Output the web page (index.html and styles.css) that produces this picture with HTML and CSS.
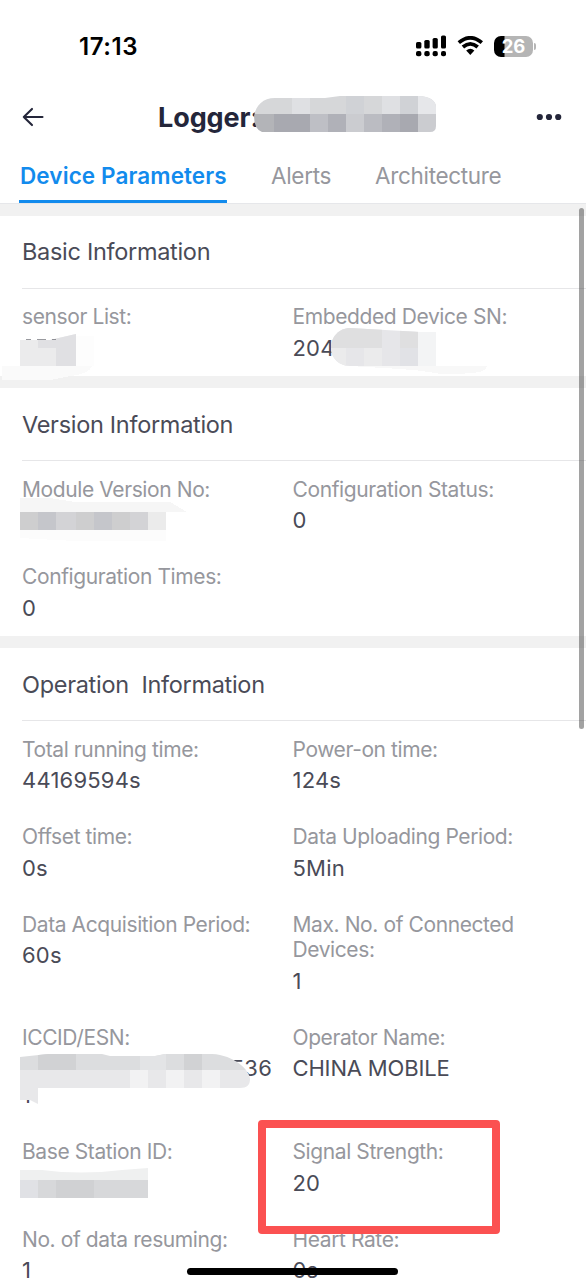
FILE: index.html
```
<!DOCTYPE html>
<html lang="en">
<head>
<meta charset="utf-8">
<title>Logger</title>
<link rel="stylesheet" href="styles.css">
</head>
<body>
<div class="screen">
  <header class="statusbar">
    <span class="clock">17:13</span>
    <div class="indicators">
      <svg class="signal" width="31" height="22" viewBox="0 0 31 22">
        <rect x="0" y="7" width="5.4" height="6.5" rx="1.6"/><rect x="8.3" y="5" width="5.4" height="8.5" rx="1.6"/><rect x="16.6" y="3" width="5.2" height="10.5" rx="1.6"/><rect x="25" y="0.5" width="5" height="13" rx="1.6"/>
        <rect x="0" y="16" width="5.4" height="5.3" rx="2"/><rect x="8.3" y="16" width="5.4" height="5.3" rx="2"/><rect x="16.6" y="16" width="5.2" height="5.3" rx="2"/><rect x="25" y="16" width="5" height="5.3" rx="2"/>
      </svg>
      <svg class="wifi" width="27" height="20" viewBox="0 0 27 20">
        <path d="M1.8 6.7Q13.3-3.1 24.8 6.7" fill="none" stroke="#000" stroke-width="3.7"/>
        <path d="M5.9 11Q13.3 4.6 20.7 11" fill="none" stroke="#000" stroke-width="3.7"/>
        <path d="M9.2 14.5Q13.3 11.2 17.4 14.5L13.3 19Z"/>
      </svg>
      <div class="battery"><span>26</span></div>
      <i class="battery-tip"></i>
    </div>
  </header>
  <nav class="titlebar">
    <svg width="24" height="22" viewBox="0 0 24 22" fill="none" stroke="#24263a" stroke-width="2.1" stroke-linecap="round" stroke-linejoin="round"><path d="M1.8 11H20.5M10 2.9L1.8 11L10 19.1"/></svg>
    <h1>Logger:</h1>
    <svg class="more" width="26" height="8" viewBox="0 0 26 8" fill="#24263a"><circle cx="3.8" cy="4" r="3.1"/><circle cx="13" cy="4" r="3.1"/><circle cx="22.2" cy="4" r="3.1"/></svg>
  </nav>
  <div class="tabs">
    <span class="tab active">Device Parameters</span>
    <span class="tab alerts">Alerts</span>
    <span class="tab arch">Architecture</span>
  </div>
  <main>
    <section>
      <h2>Basic Information</h2>
      <dl>
        <div><dt>sensor List:</dt><dd></dd></div>
        <div><dt>Embedded Device SN:</dt><dd>204</dd></div>
      </dl>
    </section>
    <section>
      <h2>Version Information</h2>
      <dl>
        <div><dt>Module Version No:</dt><dd></dd></div>
        <div><dt>Configuration Status:</dt><dd>0</dd></div>
        <div><dt>Configuration Times:</dt><dd>0</dd></div>
      </dl>
    </section>
    <section>
      <h2>Operation&nbsp; Information</h2>
      <dl>
        <div><dt>Total running time:</dt><dd>44169594s</dd></div>
        <div><dt>Power-on time:</dt><dd>124s</dd></div>
        <div><dt>Offset time:</dt><dd>0s</dd></div>
        <div><dt>Data Uploading Period:</dt><dd>5Min</dd></div>
        <div><dt>Data Acquisition Period:</dt><dd>60s</dd></div>
        <div><dt>Max. No. of Connected<br>Devices:</dt><dd>1</dd></div>
        <div><dt>ICCID/ESN:</dt><dd class="iccid"><span>536</span>1</dd></div>
        <div><dt>Operator Name:</dt><dd class="carrier">CHINA MOBILE</dd></div>
        <div><dt>Base Station ID:</dt><dd></dd></div>
        <div><dt>Signal Strength:</dt><dd>20</dd></div>
        <div><dt>No. of data resuming:</dt><dd>1</dd></div>
        <div><dt>Heart Rate:</dt><dd>0s</dd></div>
      </dl>
    </section>
  </main>

  <svg class="overlay" width="586" height="1282" viewBox="0 0 586 1282" shape-rendering="crispEdges">
    <defs>
      <clipPath id="title-mask"><path d="M254 116C256 105 263 98 275 98H325L340 96H418C430 96 436 101 436 107V126Q436 132 430 132H262Q254 129 254 116Z"/></clipPath>
      <clipPath id="sn-mask"><path d="M331 348C331 337 339 328 350 328L420 332H436V366H350C339 366 331 358 331 348Z"/></clipPath>
      <clipPath id="sensor-mask"><path d="M20 340H50L76 334V366H20Z"/></clipPath>
      <clipPath id="iccid-mask"><path d="M20 1057L48 1054H102L110 1056H155L165 1054H212C234 1055 250 1070 250 1079C250 1085 247 1088 240 1088H38V1104L30 1100H20Z"/></clipPath>
      <clipPath id="station-mask"><path d="M20 1170H42Q80 1175 122 1170L148 1168V1198H20Z"/></clipPath>
    </defs>
    <g clip-path="url(#title-mask)">
      <path fill="#d6d7d9" d="M254 96H436V114H254Z"/><path fill="#dfe0e3" d="M292 96H310V114H292ZM382 96H400V114H382Z"/><path fill="#d0d2d6" d="M346 96H364V114H346ZM400 96H418V114H400Z"/><path fill="#e6e7ea" d="M418 96H436V114H418Z"/>
      <path fill="#b3b4b8" d="M254 114H274V132H254Z"/><path fill="#a8a9b0" d="M274 114H310V132H274ZM400 114H418V132H400Z"/><path fill="#bebfc5" d="M310 114H328V132H310Z"/><path fill="#b0b1b8" d="M328 114H346V132H328ZM382 114H400V132H382Z"/><path fill="#cbccd0" d="M346 114H364V132H346ZM418 114H436V132H418Z"/><path fill="#bbbcc2" d="M364 114H382V132H364Z"/>
    </g>
    <path fill="#fafafa" d="M2 366H92Q89 374 70 376L50 380H2Z"/><path fill="#fdfdfd" d="M76 336H94V366H76Z"/>
    <g clip-path="url(#sensor-mask)"><path fill="#ebebec" d="M20 334H76V366H20Z"/><path fill="#e0e0e3" d="M38 334H76V348H38ZM56 348H76V366H56Z"/></g>
    <path fill="#55565f" d="M26 339H31V340H26ZM37 339H46V340H37ZM52 339H56V340H52Z" opacity=".6"/>
    <path fill="#f8f8f8" d="M350 366H487Q486 373 465 373.500H438Q420 370 400 369Z"/>
    <g clip-path="url(#sn-mask)"><path fill="#e6e6e9" d="M331 328H418V366H331Z"/><path fill="#dfdfe0" d="M331 328H382V348H331ZM400 328H418V348H400Z"/><path fill="#ebebec" d="M331 348H346V366H331ZM364 348H382V366H364Z"/><path fill="#e1e2e6" d="M400 348H418V366H400Z"/><path fill="#f3f4f5" d="M418 328H436V366H418Z"/></g>
    <path fill="#f6f6f6" d="M20 498H50L75 502H170L186 511.500H20Z"/><path fill="#fcfcfc" d="M20 530H166V541H75L20 538Z"/>
    <path fill="#cececf" d="M20 512H148V530H20Z"/><path fill="#c5c6cb" d="M38 512H56V530H38ZM94 512H112V530H94Z"/><path fill="#d3d3d6" d="M56 512H76V530H56ZM130 512H148V530H130Z"/><path fill="#ebebeb" d="M148 512H166V530H148Z"/>
    <g clip-path="url(#iccid-mask)"><path fill="#dcdddf" d="M20 1054H250V1070H20Z"/><path fill="#d1d2d4" d="M38 1054H76V1070H38ZM184 1054H202V1070H184Z"/><path fill="#e3e4e6" d="M140 1054H166V1070H140Z"/><path fill="#e8e8ea" d="M20 1070H250V1104H20Z"/><path fill="#f2f2f3" d="M130 1070H148V1088H130ZM166 1070H184V1088H166ZM202 1070H220V1088H202Z"/></g>
    <g clip-path="url(#station-mask)"><path fill="#eff0f0" d="M20 1168H148V1180H20Z"/><path fill="#d7d8da" d="M20 1180H148V1198H20Z"/><path fill="#e0e1e5" d="M20 1180H38V1198H20Z"/><path fill="#d0d1d3" d="M56 1180H94V1198H56Z"/></g>
  </svg>
  <div class="highlight"></div>
  <div class="scrollbar"></div>
  <div class="home-indicator"></div>
</div>
</body>
</html>
```
FILE: styles.css
```
* { box-sizing: border-box; }
html, body { margin: 0; height: 1282px; overflow: hidden; background: #fff; }
.screen { position: relative; width: 586px; height: 1282px; overflow: hidden; font-family: Inter, "Liberation Sans", sans-serif; color: #4a4b57; }
.statusbar { height: 92px; padding: 0 50px 0 79px; display: flex; align-items: center; justify-content: space-between; }
.clock { font-size: 24px; font-weight: 600; color: #000; letter-spacing: .6px; }
.indicators { display: flex; align-items: center; }
.wifi { margin: 0 10px 0 10px; }
.battery { width: 39px; height: 21px; border-radius: 7px; background: linear-gradient(90deg, #000 10px, #b5b5b5 11px); color: #fff; font-size: 18.500px; font-weight: 700; line-height: 21px; text-align: center; letter-spacing: -.1px; }
.battery-tip { width: 2px; height: 7px; margin-left: 1px; border-radius: 0 2px 2px 0; background: #b5b5b5; }
.titlebar { height: 50px; padding: 1px 24px 0 22px; display: flex; align-items: center; }
.titlebar svg { position: relative; top: -.5px; }
.titlebar h1 { margin: 0 0 1px 112px; font-size: 27px; line-height: 49px; font-weight: 700; color: #24263a; letter-spacing: -.1px; }
.more { margin-left: auto; }
.tabs { height: 62px; padding-left: 19px; display: flex; border-bottom: 1px solid #e6e7ea; color: #96979d; font-size: 22.500px; line-height: 67px; letter-spacing: -.32px; }
.tab { height: 61px; }
.tab.active { width: 208px; padding-left: 1px; color: #128bed; font-weight: 600; letter-spacing: .1px; border-bottom: 3px solid #128bed; white-space: nowrap; }
.alerts { margin-left: 44px; width: 60px; }
.arch { margin-left: 44px; }
section { border-top: 12px solid #f1f1f1; }
h2 { margin: 0 0 0 22px; height: 73px; padding-top: .4px; font-size: 23.500px; line-height: 72px; font-weight: 400; letter-spacing: -.3px; border-bottom: 1.500px solid #e6e6e8; }
dl { margin: 0; padding-left: 22px; display: grid; grid-template-columns: 270.500px 1fr; }
dl > div { padding: 15.200px 0 14.800px; }
dt { margin-bottom: 5px; min-height: 25.500px; font-size: 21px; line-height: 25.500px; letter-spacing: -.4px; color: #96979d; white-space: nowrap; }
dd { margin: 0; min-height: 27px; font-size: 22px; line-height: 27px; letter-spacing: .2px; }
.carrier { letter-spacing: -.15px; }
.iccid span { display: block; width: 250px; text-align: right; }
.overlay { position: absolute; inset: 0; }
.highlight { position: absolute; left: 258px; top: 1120px; width: 242px; height: 114px; border: 8px solid #fb5151; border-radius: 4px; }
.scrollbar { position: absolute; left: 579px; top: 208px; width: 5px; height: 521px; border-radius: 3px; background: rgba(70,70,70,.5); }
.home-indicator { position: absolute; left: 187px; top: 1268px; width: 211px; height: 7px; border-radius: 4px; background: #000; }
```
